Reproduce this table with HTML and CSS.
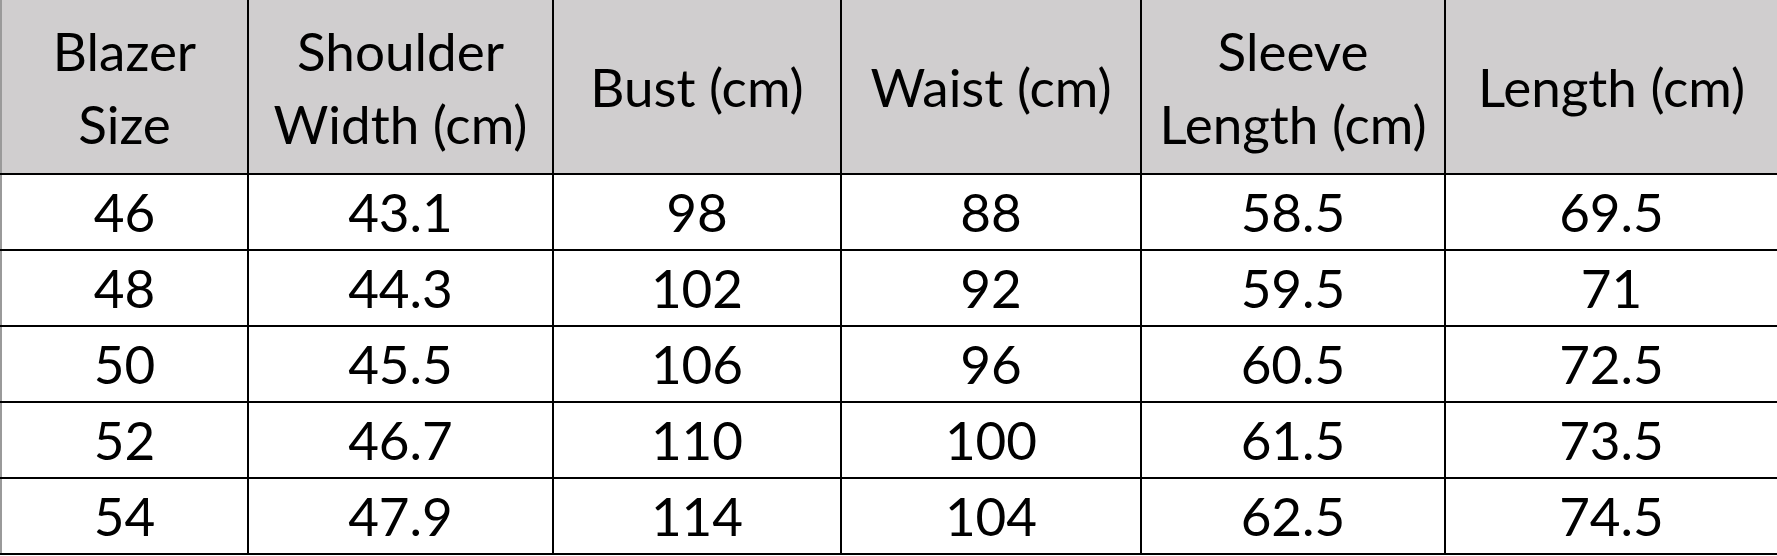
FILE: index.html
```html
<!DOCTYPE html>
<html>
<head>
<meta charset="utf-8">
<link rel="stylesheet" href="styles.css">
</head>
<body>
<table class="size-table">
  <colgroup>
    <col class="c1"><col class="c2"><col class="c3"><col class="c4"><col class="c5"><col class="c6">
  </colgroup>
  <thead>
    <tr>
      <th>Blazer<br>Size</th>
      <th>Shoulder<br>Width (cm)</th>
      <th>Bust (cm)</th>
      <th>Waist (cm)</th>
      <th>Sleeve<br>Length (cm)</th>
      <th>Length (cm)</th>
    </tr>
  </thead>
  <tbody>
    <tr><td>46</td><td>43.1</td><td>98</td><td>88</td><td>58.5</td><td>69.5</td></tr>
    <tr><td>48</td><td>44.3</td><td>102</td><td>92</td><td>59.5</td><td>71</td></tr>
    <tr><td>50</td><td>45.5</td><td>106</td><td>96</td><td>60.5</td><td>72.5</td></tr>
    <tr><td>52</td><td>46.7</td><td>110</td><td>100</td><td>61.5</td><td>73.5</td></tr>
    <tr><td>54</td><td>47.9</td><td>114</td><td>104</td><td>62.5</td><td>74.5</td></tr>
  </tbody>
</table>
</body>
</html>
```
FILE: styles.css
```css
html, body {
  margin: 0;
  padding: 0;
  background: #ffffff;
}
.size-table {
  border-collapse: collapse;
  table-layout: fixed;
  width: 1777px;
  font-family: Lato, "Liberation Sans", sans-serif;
  font-size: 53px;
  color: #000;
}
.c1 { width: 247px; }
.c2 { width: 305px; }
.c3 { width: 288px; }
.c4 { width: 300px; }
.c5 { width: 304px; }
.c6 { width: 333px; }
.size-table th,
.size-table td {
  border: 2px solid #000;
  text-align: center;
  vertical-align: middle;
  padding: 0;
  font-weight: normal;
}
.size-table th {
  background: #d0cecf;
  height: 173px;
  line-height: 73px;
  border-top: none;
}
.size-table td {
  height: 74px;
  line-height: 74px;
}
.size-table tr > :first-child {
  border-left: 2px solid #9a9a9a;
}
```
